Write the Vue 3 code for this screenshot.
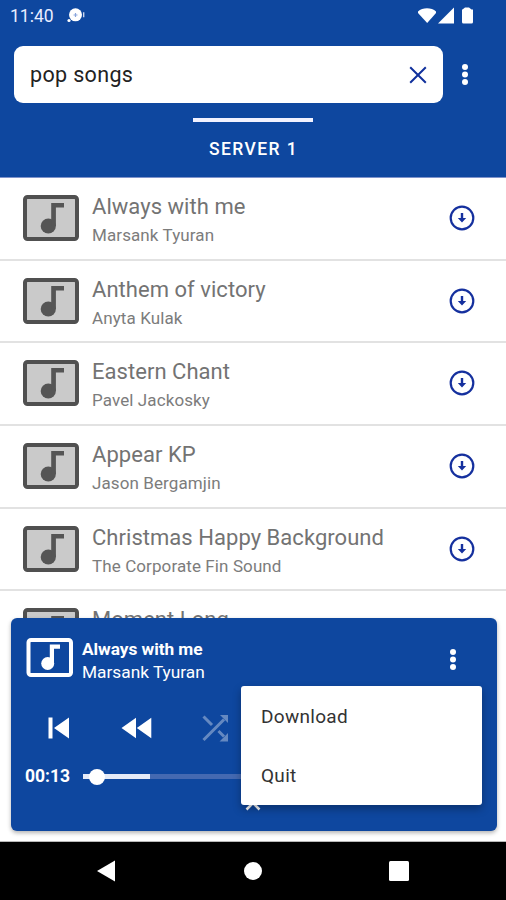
<script setup>
const songs = [
  { title: 'Always with me', artist: 'Marsank Tyuran' },
  { title: 'Anthem of victory', artist: 'Anyta Kulak' },
  { title: 'Eastern Chant', artist: 'Pavel Jackosky' },
  { title: 'Appear KP', artist: 'Jason Bergamjin' },
  { title: 'Christmas Happy Background', artist: 'The Corporate Fin Sound' },
  { title: 'Moment Long', artist: '' },
]
const menuItems = ['Download', 'Quit']
</script>

<template>
  <div class="screen">
    <header class="top">
      <div class="status">
        <span class="clock">11:40</span>
        <svg class="notif" width="18" height="16" viewBox="0 0 18 16">
          <circle cx="8.500" cy="7.800" r="6.500" fill="#fff" />
          <circle cx="2" cy="13.500" r="1.600" fill="#fff" />
          <path d="M8.500 6v4M6.500 8h4" stroke="#8aa6dc" stroke-width="1.200" />
          <path d="M16.700 5.200v5" stroke="#d5def2" stroke-width="1.300" />
        </svg>
        <svg class="signals" width="58" height="18" viewBox="0 0 58 18" fill="#fff">
          <path d="M1 4.500C5.500.200 14.500.200 19 4.500V6L10.200 16 1 6z" />
          <path d="M21 16.500L37 .500v16z" />
          <path d="M45.500 2.500L48 .500h4l2.500 2H56V15q0 1.500-1.500 1.500h-8q-1.500 0-1.500-1.500V2.500z" />
        </svg>
      </div>
      <div class="search-row">
        <div class="search">
          <span>pop songs</span>
          <svg width="18" height="18" viewBox="0 0 18 18">
            <path d="M1.200 1.200l15.600 15.600M16.800 1.200L1.200 16.800" stroke="#10309c" stroke-width="2" />
          </svg>
        </div>
        <svg class="dots" width="8" height="24" viewBox="0 0 8 24" fill="#fff">
          <circle cx="4" cy="4" r="3" /><circle cx="4" cy="11.500" r="3" /><circle cx="4" cy="19" r="3" />
        </svg>
      </div>
      <div class="tab"><span>SERVER 1</span></div>
    </header>

    <main class="list">
      <div v-for="song in songs" :key="song.title" class="row">
        <svg class="cover" width="56" height="46" viewBox="0 0 56 46">
          <rect x="2" y="2" width="52" height="42" rx="2.500" fill="#cacaca" stroke="#505050" stroke-width="4" />
          <circle cx="25.300" cy="31" r="7.600" fill="#555" />
          <path d="M28.200 8H41v4.600h-8.100V31h-4.700z" fill="#555" />
        </svg>
        <div class="info">
          <div class="title">{{ song.title }}</div>
          <div class="artist">{{ song.artist }}</div>
        </div>
        <svg class="download" width="26" height="26" viewBox="0 0 26 26">
          <circle cx="13" cy="13" r="11.300" fill="none" stroke="#15309e" stroke-width="2.200" />
          <path d="M11.800 8h2.400v5h3L13 17.500 8.800 13h3z" fill="#15309e" />
        </svg>
      </div>
    </main>

    <section class="player">
      <div class="now">
        <svg width="47" height="39" viewBox="0 0 47 39">
          <rect x="2.500" y="2" width="42.500" height="35" rx="2.500" fill="none" stroke="#fff" stroke-width="4" />
          <circle cx="21.700" cy="25.500" r="6.500" fill="#fff" />
          <path d="M23.800 6.500H34v4.300h-6V25.500h-4.200z" fill="#fff" />
        </svg>
        <div class="now-text">
          <div class="now-title">Always with me</div>
          <div class="now-artist">Marsank Tyuran</div>
        </div>
        <svg class="dots" width="8" height="24" viewBox="0 0 8 24" fill="#fff">
          <circle cx="4" cy="4" r="3" /><circle cx="4" cy="11.500" r="3" /><circle cx="4" cy="19" r="3" />
        </svg>
      </div>
      <div class="controls">
        <svg width="22" height="22" viewBox="0 0 22 22" fill="#fff">
          <path d="M.500.500h4v21h-4zM21 .500v21L6 11z" />
        </svg>
        <svg width="31" height="22" viewBox="0 0 31 22" fill="#fff">
          <path d="M15 .800v20.400L.500 11zM30.300.800v20.400L15.800 11z" />
        </svg>
        <svg width="28" height="28" viewBox="0 0 28 28">
          <g opacity=".36">
            <path d="M1.500 2.500l8.500 8.500M1.500 26L22 5.500M16.500 17l5.500 5.500" fill="none" stroke="#fff" stroke-width="3" />
            <path d="M18 1h8v8zM26 19v8.500h-8.500z" fill="#fff" />
          </g>
        </svg>
      </div>
      <div class="progress">
        <span>00:13</span>
        <div class="track"><div class="buffer"></div><div class="thumb"></div></div>
      </div>
      <svg class="chevron" width="16" height="10" viewBox="0 0 16 10">
        <path d="M1.500 8.500L8 2l6.500 6.500" fill="none" stroke="#fff" stroke-width="2.500" />
      </svg>
      <div class="menu">
        <div v-for="item in menuItems" :key="item" class="item">{{ item }}</div>
      </div>
    </section>

    <nav class="nav">
      <svg width="18" height="22" viewBox="0 0 18 22"><path d="M18 .500v21L0 11z" fill="#fff" /></svg>
      <svg width="18" height="18" viewBox="0 0 18 18"><circle cx="9" cy="9" r="9" fill="#fff" /></svg>
      <svg width="20" height="20" viewBox="0 0 20 20"><rect width="20" height="20" rx="1.500" fill="#fff" /></svg>
    </nav>
  </div>
</template>

<style>
body { margin: 0; }
</style>

<style scoped>
* { box-sizing: border-box; }
svg { display: block; flex: none; }
.screen {
  position: relative;
  width: 506px;
  height: 900px;
  overflow: hidden;
  display: flex;
  flex-direction: column;
  background: #fff;
  font-family: Roboto, sans-serif;
}
.top { flex: none; height: 178px; background: #0e479f; color: #fff; border-bottom: 1px solid #7f93cb; }
.status { display: flex; height: 46px; padding: 7px 31px 0 10px; }
.clock { width: 57px; font-size: 17.500px; line-height: 19px; color: #e8edff; }
.signals { margin-left: auto; }
.search-row { display: flex; align-items: center; height: 57px; padding-left: 14px; }
.search {
  display: flex;
  align-items: center;
  justify-content: space-between;
  width: 429px;
  height: 57px;
  padding: 0 16px;
  border-radius: 9px;
  background: #fff;
  color: #222;
  font-size: 21.500px;
  letter-spacing: 0.350px;
}
.search-row .dots { margin-left: 18px; }
.tab {
  width: 120px;
  margin: 15px auto 0;
  padding-top: 16px;
  border-top: 4px solid #f2f2ff;
  text-align: center;
  font-size: 17.500px;
  line-height: 22px;
  font-weight: 500;
  letter-spacing: 1.400px;
  text-indent: 1px;
  white-space: nowrap;
}
.list { flex: none; height: 664px; overflow: hidden; border-bottom: 1px solid #b8b8b8; }
.row {
  display: flex;
  height: 82.670px;
  padding: 0 31px 0 23px;
  border-bottom: 2px solid #e2e2e2;
}
.row:last-child { border-bottom: 0; }
.cover { margin-top: 17px; }
.info { flex: 1; padding: 15px 0 0 13px; white-space: nowrap; }
.title { font-size: 22px; line-height: 27px; letter-spacing: 0.040px; color: #737373; }
.artist { font-size: 17px; line-height: 20px; margin-top: 5px; letter-spacing: 0.1px; color: #7c7c7c; }
.download { margin-top: 27px; }
.player {
  position: absolute;
  left: 11px;
  top: 618px;
  width: 486px;
  height: 213px;
  padding: 20px 15px 0;
  border-radius: 6px;
  background: #0e479f;
  color: #fff;
  box-shadow: 0 2px 4px rgba(0, 0, 0, 0.3);
}
.now { display: flex; height: 49px; }
.now-text { flex: 1; padding-left: 9px; line-height: 23px; font-size: 17.300px; white-space: nowrap; }
.now-title { font-weight: 700; letter-spacing: -0.050px; }
.now .dots { margin: 10px 25px 0 0; }
.controls { display: flex; align-items: center; height: 42px; padding: 0 0 0 22px; margin-top: 20px; }
.controls svg + svg { margin-left: 51px; }
.controls svg:nth-child(3) { margin-left: 50px; }
.progress { display: flex; align-items: center; height: 24px; margin-top: 15px; }
.progress span { width: 58px; margin-left: -1px; font-size: 17.500px; font-weight: 700; }
.track { position: relative; width: 320px; height: 5px; background: #4469b1; }
.buffer { width: 67px; height: 5px; background: #e5ebf8; }
.thumb { position: absolute; left: 6px; top: -5px; width: 16px; height: 16px; border-radius: 50%; background: #fff; }
.chevron { position: absolute; left: 234px; top: 183px; }
.menu {
  position: absolute;
  left: 230px;
  top: 68px;
  width: 241px;
  height: 119px;
  border-radius: 3px;
  background: #fff;
  box-shadow: 0 4px 8px rgba(0, 0, 0, 0.3);
}
.item { height: 59px; padding: 1px 0 0 20px; line-height: 60px; font-size: 19px; letter-spacing: 0.3px; color: #333; }
.nav {
  flex: none;
  display: flex;
  align-items: center;
  justify-content: space-between;
  height: 58px;
  padding: 0 97px;
  background: #000;
}
.nav svg:nth-child(2) { margin-left: 2px; }
</style>
